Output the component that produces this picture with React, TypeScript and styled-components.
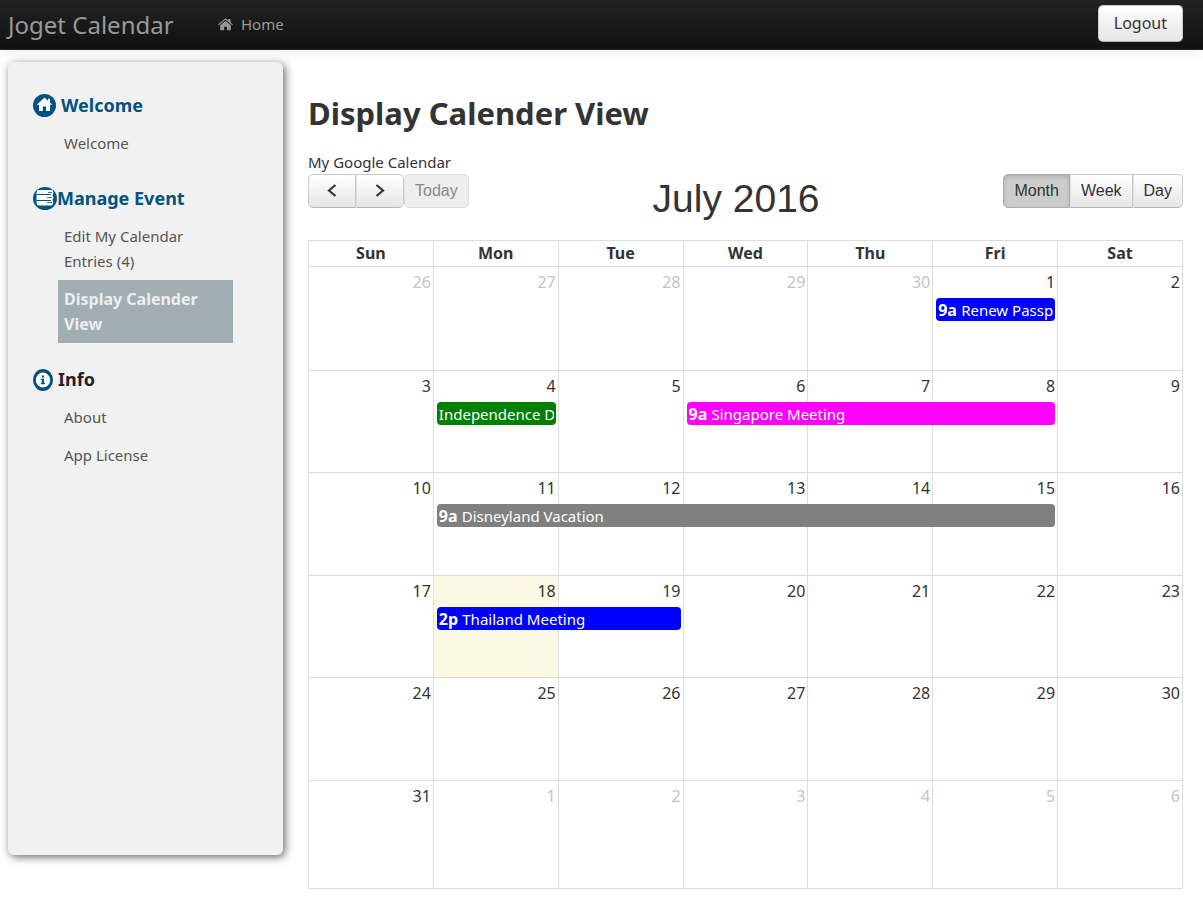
import React from "react";
import styled, { createGlobalStyle, css } from "styled-components";

const Global = createGlobalStyle`
  *, *::before, *::after { box-sizing: border-box; }
  body {
    margin: 0;
    background: #fff;
    color: #333;
    font-family: Tahoma, "Noto Sans", sans-serif;
    font-size: 15px;
    line-height: 25px;
  }
`;

const blue = "#00537f";

const TopBar = styled.header`
  display: flex;
  align-items: center;
  height: 50px;
  padding: 0 20px 0 8px;
  background: linear-gradient(#222, #111);
  border-bottom: 1px solid #252525;
  box-shadow: 0 1px 10px rgba(0, 0, 0, 0.1);
`;

const Brand = styled.a`
  width: 210px;
  color: #999;
  font-size: 24px;
  text-decoration: none;
  white-space: nowrap;
`;

const HomeLink = styled.a`
  display: flex;
  align-items: center;
  gap: 8px;
  color: #999;
  text-decoration: none;
`;

const buttonFace = css`
  border: 1px solid #ccc;
  border-bottom-color: #b3b3b3;
  background: linear-gradient(#fff, #e6e6e6);
  color: #333;
  cursor: pointer;
`;

const LogoutButton = styled.button`
  ${buttonFace}
  height: 37px;
  margin: 0 0 3px auto;
  padding: 0 15px;
  border-radius: 5px;
  font: 16px Tahoma, "Noto Sans", sans-serif;
`;

const Layout = styled.div`
  display: grid;
  grid-template-columns: 275px minmax(0, 1fr);
  gap: 25px;
  padding: 12px 20px 0 8px;
`;

const Sidebar = styled.nav`
  margin-bottom: 34px;
  padding: 31px 50px 0 25px;
  border-radius: 6px;
  background: #f1f1f1;
  box-shadow: 2px 2px 8px #666;
`;

const Section = styled.section`
  margin-bottom: 24px;
`;

const SectionTitle = styled.h2<{ $gap: number; $dark?: boolean }>`
  display: flex;
  align-items: center;
  gap: ${(p) => p.$gap}px;
  margin: 0 0 6px;
  color: ${(p) => (p.$dark ? "#222" : blue)};
  font-size: 18px;
  line-height: 25px;
`;

const MenuLink = styled.a<{ $active?: boolean }>`
  display: block;
  margin-left: 25px;
  padding: 7px 6px 6px;
  color: ${(p) => (p.$active ? "#eee" : "#555")};
  background: ${(p) => (p.$active ? "#a0aeb3" : "transparent")};
  font-size: ${(p) => (p.$active ? 16 : 15)}px;
  font-weight: ${(p) => (p.$active ? 700 : 400)};
  text-decoration: none;
`;

const Main = styled.main`
  padding-top: 31px;
`;

const PageTitle = styled.h1`
  margin: 0 0 17px;
  font-size: 31px;
  line-height: 40px;
`;

const CalendarName = styled.div`
  line-height: 24px;
`;

const Toolbar = styled.div`
  display: flex;
  justify-content: space-between;
  align-items: flex-start;
  height: 66px;
`;

const MonthTitle = styled.h2`
  margin: 0;
  font: 39px/50px "Liberation Sans", Arial, sans-serif;
`;

const ButtonGroup = styled.div`
  display: flex;
`;

const ToolButton = styled.button<{ $active?: boolean; $wide?: boolean }>`
  ${buttonFace}
  display: flex;
  align-items: center;
  justify-content: center;
  height: 34px;
  padding: 0 ${(p) => (p.$wide ? 17 : 10)}px;
  font: 16px "Liberation Sans", Arial, sans-serif;
  &:first-child { border-radius: 5px 0 0 5px; }
  &:last-child { border-radius: 0 5px 5px 0; }
  & + & { border-left-color: #ddd; }
  ${(p) =>
    p.$active &&
    css`
      background: #ccc;
      border-color: #adadad;
      box-shadow: inset 0 2px 4px rgba(0, 0, 0, 0.15);
    `}
`;

const TodayButton = styled.button`
  height: 34px;
  padding: 0 10px;
  border: 1px solid #ddd;
  border-radius: 5px;
  background: #eee;
  color: #888;
  font: 16px "Liberation Sans", Arial, sans-serif;
`;

const Calendar = styled.table`
  width: 100%;
  border-collapse: collapse;
  table-layout: fixed;
`;

const DayName = styled.th`
  height: 26px;
  padding: 0;
  border: 1px solid #ddd;
  font-size: 16px;
`;

const Week = styled.tr`
  height: 102px;
  &:nth-child(odd) { height: 103px; }
  &:first-child { height: 104px; }
  &:last-child { height: 108px; }
`;

const Day = styled.td<{ $other?: boolean; $today?: boolean }>`
  padding: 3px 0 0;
  border: 1px solid #ddd;
  background: ${(p) => (p.$today ? "#fcf8e3" : "transparent")};
  color: ${(p) => (p.$other ? "#c4c4c4" : "#333")};
  vertical-align: top;
`;

const DayNumber = styled.div`
  padding-right: 2px;
  font-size: 16px;
  text-align: right;
`;

const EventBar = styled.a<{ $span: number; $color: string }>`
  display: block;
  position: relative;
  width: calc(${(p) => p.$span} * (100% + 1px) - 6px);
  height: 23px;
  margin: 3px 0 0 3px;
  padding: 0 2px;
  border-radius: 4px;
  background: ${(p) => p.$color};
  color: #fff;
  line-height: 24px;
  text-decoration: none;
`;

const EventText = styled.span`
  display: block;
  height: 23px;
  overflow: hidden;
  white-space: nowrap;
`;

const EventTime = styled.b`
  font-size: 16px;
`;

type CalEvent = { time?: string; title: string; span: number; color: string };

const events: Record<string, CalEvent> = {
  "0-5": { time: "9a", title: "Renew Passport", span: 1, color: "#0000ff" },
  "1-1": { title: "Independence Day", span: 1, color: "#008000" },
  "1-3": { time: "9a", title: "Singapore Meeting", span: 3, color: "#ff00ff" },
  "2-1": { time: "9a", title: "Disneyland Vacation", span: 5, color: "#808080" },
  "3-1": { time: "2p", title: "Thailand Meeting", span: 2, color: "#0000ff" },
};

const dayNames = ["Sun", "Mon", "Tue", "Wed", "Thu", "Fri", "Sat"];

const weeks = Array.from({ length: 6 }, (_, w) =>
  Array.from({ length: 7 }, (_, d) => {
    const n = w * 7 + d - 4;
    if (n < 1) return { n: n + 30, other: true };
    if (n > 31) return { n: n - 31, other: true };
    return { n, other: false };
  })
);

const HOUSE =
  "M12 6.2 L3.5 13.2 V21 H9.8 V15.500 H14.2 V21 H20.5 V13.2 Z M12 2 L16.5 5.7 V3.200 H20 V8.6 L24 11.9 L22.8 13.3 L12 4.5 L1.2 13.3 L0 11.9 Z";

const HomeGlyph = () => (
  <svg width="15" height="15" viewBox="0 0 24 24" fill="#999" aria-hidden="true">
    <path d={HOUSE} />
  </svg>
);

const WelcomeIcon = () => (
  <svg width="23" height="23" viewBox="0 0 23 23" aria-hidden="true">
    <circle cx="11.5" cy="11.5" r="11.5" fill={blue} />
    <path
      d="M11.5 3.5 3.8 10.800H6V17H9.800V12.500H13V17H17V10.800H19.300L17 8.600V4.800H15V6.700Z"
      fill="#fff"
    />
  </svg>
);

const ListIcon = () => (
  <svg width="24" height="23" viewBox="0 0 24 23" aria-hidden="true">
    <ellipse cx="12" cy="11.5" rx="12" ry="11.5" fill={blue} />
    <path
      d="M4.500 3H19.500L20.500 5.500 19.500 8 20.500 10.500 19.500 13 20.500 15.500 19 18.500H4.500L3.500 15.500V5.500Z"
      fill="#fff"
    />
    <path d="M3.500 7.500H18M3.500 13.500H18" stroke={blue} strokeWidth="1" />
    <path d="M15 5.500H19M14 10.500H19M14 15.500H19" stroke={blue} strokeWidth="0.8" />
  </svg>
);

const InfoIcon = () => (
  <svg width="20" height="22" viewBox="0 0 20 22" aria-hidden="true">
    <ellipse cx="10" cy="11" rx="10" ry="11" fill={blue} />
    <ellipse cx="10" cy="11" rx="7.2" ry="7.6" fill="#fff" />
    <path d="M9 6.500H11V8.500H9ZM8 9.800H11V14H12V15.300H8V14H9V11.100H8Z" fill={blue} />
  </svg>
);

const Chevron = ({ d }: { d: string }) => (
  <svg width="12" height="14" viewBox="0 0 12 14" fill="none" stroke="#333" strokeWidth="2.2" aria-hidden="true">
    <path d={d} />
  </svg>
);

export default function App() {
  return (
    <>
      <Global />
      <TopBar>
        <Brand href="#">Joget Calendar</Brand>
        <HomeLink href="#">
          <HomeGlyph />
          Home
        </HomeLink>
        <LogoutButton type="button">Logout</LogoutButton>
      </TopBar>
      <Layout>
        <Sidebar aria-label="Main menu">
          <Section>
            <SectionTitle $gap={5}>
              <WelcomeIcon />
              Welcome
            </SectionTitle>
            <MenuLink href="#">Welcome</MenuLink>
          </Section>
          <Section>
            <SectionTitle $gap={0}>
              <ListIcon />
              Manage Event
            </SectionTitle>
            <MenuLink href="#">Edit My Calendar Entries (4)</MenuLink>
            <MenuLink href="#" $active aria-current="page">
              Display Calender View
            </MenuLink>
          </Section>
          <Section>
            <SectionTitle $gap={5} $dark>
              <InfoIcon />
              Info
            </SectionTitle>
            <MenuLink href="#">About</MenuLink>
            <MenuLink href="#">App License</MenuLink>
          </Section>
        </Sidebar>
        <Main>
          <PageTitle>Display Calender View</PageTitle>
          <CalendarName>My Google Calendar</CalendarName>
          <Toolbar>
            <ButtonGroup>
              <ButtonGroup>
                <ToolButton type="button" $wide aria-label="Previous month">
                  <Chevron d="M9.500 1 3 6.500 9.500 12" />
                </ToolButton>
                <ToolButton type="button" $wide aria-label="Next month">
                  <Chevron d="M2.500 1 9 6.500 2.500 12" />
                </ToolButton>
              </ButtonGroup>
              <TodayButton type="button" disabled>
                Today
              </TodayButton>
            </ButtonGroup>
            <MonthTitle>July 2016</MonthTitle>
            <ButtonGroup>
              <ToolButton type="button" $active aria-pressed="true">
                Month
              </ToolButton>
              <ToolButton type="button">Week</ToolButton>
              <ToolButton type="button">Day</ToolButton>
            </ButtonGroup>
          </Toolbar>
          <Calendar>
            <thead>
              <tr>
                {dayNames.map((name) => (
                  <DayName key={name} scope="col">
                    {name}
                  </DayName>
                ))}
              </tr>
            </thead>
            <tbody>
              {weeks.map((week, w) => (
                <Week key={w}>
                  {week.map((day, d) => {
                    const event = events[`${w}-${d}`];
                    return (
                      <Day key={d} $other={day.other} $today={!day.other && day.n === 18}>
                        <DayNumber>{day.n}</DayNumber>
                        {event && (
                          <EventBar href="#" $span={event.span} $color={event.color}>
                            <EventText>
                              {event.time && <EventTime>{event.time} </EventTime>}
                              {event.title}
                            </EventText>
                          </EventBar>
                        )}
                      </Day>
                    );
                  })}
                </Week>
              ))}
            </tbody>
          </Calendar>
        </Main>
      </Layout>
    </>
  );
}
